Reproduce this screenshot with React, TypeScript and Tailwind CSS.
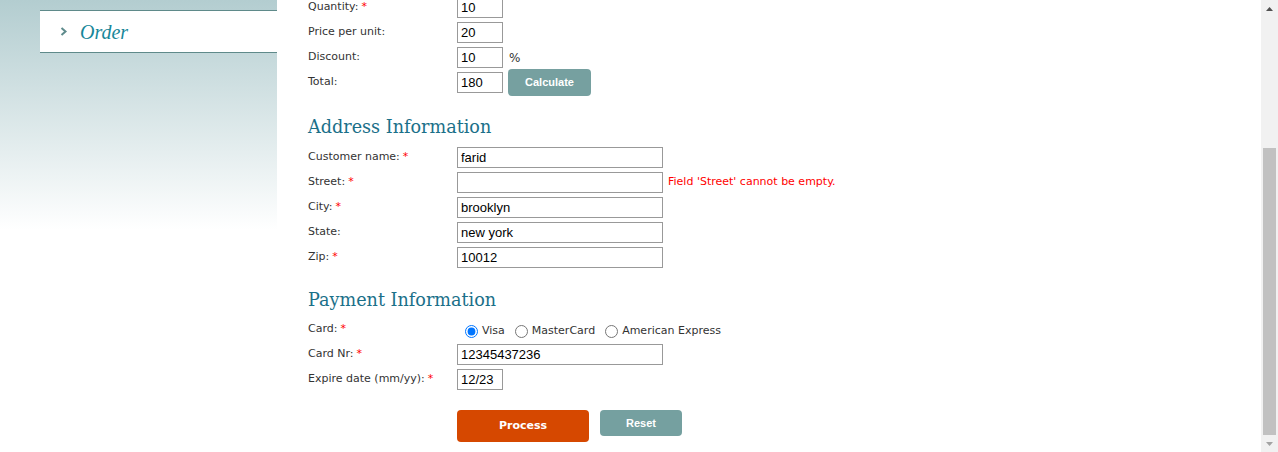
import React from 'react'

const sans = "font-['DejaVu_Sans',sans-serif]"

function Req() {
  return <span className="ml-[3px] text-[#ff0000]">*</span>
}

function Row({
  label, required = false, children,
}: {
  label: string
  required?: boolean
  children?: React.ReactNode
}) {
  return (
    <div className="flex h-[25px] items-center">
      <div className={`w-[149px] shrink-0 pb-[1px] text-[11px] text-[#333] ${sans}`}>
        {label}
        {required && <Req />}
      </div>
      {children}
    </div>
  )
}

function Field({ value, wide = false }: { value: string; wide?: boolean }) {
  return (
    <input
      readOnly
      value={value}
      className={`${wide ? 'w-[206px]' : 'w-[46px]'} h-[21px] shrink-0 border border-[#999] bg-white pl-[3px] font-['Liberation_Sans',Arial,sans-serif] text-[13px] text-black outline-none`}
    />
  )
}

function Radio({ label, checked = false, className = '' }: { label: string; checked?: boolean; className?: string }) {
  return (
    <label className={`flex items-center ${className}`}>
      <input type="radio" name="card" defaultChecked={checked} className="m-0 h-[13px] w-[13px]" />
      <span className={`ml-[4px] text-[11px] text-[#333] ${sans}`}>{label}</span>
    </label>
  )
}

function Heading({ children, className = '' }: { children: React.ReactNode; className?: string }) {
  return (
    <h2 className={`font-['DejaVu_Serif',Georgia,serif] text-[17.6px] leading-[24px] text-[#1b7089] ${className}`}>
      {children}
    </h2>
  )
}

function Sidebar() {
  return (
    <div className="w-[277px] shrink-0">
      <div className="h-[230px] bg-gradient-to-b from-[#b3cdd0] to-white pl-[40px] pt-[10px]">
        <div className="flex h-[43px] items-center border-y border-[#5f8a8a] bg-white pl-[20px]">
          <svg width="8" height="9" viewBox="0 0 8 9">
            <polyline points="1.5,1 5.5,4.5 1.5,8" fill="none" stroke="#5e8b8c" strokeWidth="2" />
          </svg>
          <span className="ml-[12px] font-['Liberation_Serif',serif] text-[20px] italic text-[#17879a]">Order</span>
        </div>
      </div>
    </div>
  )
}

function Scrollbar() {
  return (
    <div className="flex w-[17px] shrink-0 flex-col bg-[#f1f1f1]">
      <div className="flex h-[17px] items-center justify-center">
        <svg width="7" height="4" viewBox="0 0 7 4">
          <polygon points="0,4 3.5,0 7,4" fill="#505050" />
        </svg>
      </div>
      <div className="h-[131px]" />
      <div className="mx-[2px] h-[287px] bg-[#c1c1c1]" />
      <div className="flex h-[17px] items-center justify-center">
        <svg width="7" height="4" viewBox="0 0 7 4">
          <polygon points="0,0 7,0 3.5,4" fill="#a3a3a3" />
        </svg>
      </div>
    </div>
  )
}

export default function App() {
  return (
    <div className="flex h-[452px] w-[1278px] overflow-hidden bg-white">
      <Sidebar />
      <div className="flex-1 pl-[31px]">
        <div className="-mt-[5px]">
          <Row label="Quantity:" required>
            <Field value="10" />
          </Row>
          <Row label="Price per unit:">
            <Field value="20" />
          </Row>
          <Row label="Discount:">
            <Field value="10" />
            <span className={`ml-[6px] text-[12px] text-[#333] ${sans}`}>%</span>
          </Row>
          <Row label="Total:">
            <Field value="180" />
            <button className="-mt-[1px] ml-[5px] h-[27px] w-[83px] shrink-0 self-start rounded-[4px] bg-[#76a0a0] font-['Liberation_Sans',Arial,sans-serif] text-[11px] font-bold text-white">
              Calculate
            </button>
          </Row>

          <Heading className="mt-[20px]">Address Information</Heading>
          <div className="mt-[6px]">
            <Row label="Customer name:" required>
              <Field value="farid" wide />
            </Row>
            <Row label="Street:" required>
              <Field value="" wide />
              <span className={`ml-[5px] text-[11px] text-[#ff0000] ${sans}`}>
                Field 'Street' cannot be empty.
              </span>
            </Row>
            <Row label="City:" required>
              <Field value="brooklyn" wide />
            </Row>
            <Row label="State:">
              <Field value="new york" wide />
            </Row>
            <Row label="Zip:" required>
              <Field value="10012" wide />
            </Row>
          </div>

          <Heading className="mt-[18px]">Payment Information</Heading>
          <div className="mt-[5px]">
            <Row label="Card:" required>
              <div className="ml-[8px] flex items-center pt-[4px]">
                <Radio label="Visa" checked />
                <Radio label="MasterCard" className="ml-[10px]" />
                <Radio label="American Express" className="ml-[10px]" />
              </div>
            </Row>
            <Row label="Card Nr:" required>
              <Field value="12345437236" wide />
            </Row>
            <Row label="Expire date (mm/yy):" required>
              <Field value="12/23" />
            </Row>
          </div>

          <div className="ml-[149px] mt-[18px] flex items-start gap-[11px]">
            <button className={`h-[32px] w-[132px] rounded-[4px] bg-[#d64800] text-[11px] font-bold text-white ${sans}`}>
              Process
            </button>
            <button className="h-[26px] w-[82px] rounded-[4px] bg-[#75a0a0] font-['Liberation_Sans',Arial,sans-serif] text-[11px] font-bold text-white">
              Reset
            </button>
          </div>
        </div>
      </div>
      <Scrollbar />
    </div>
  )
}
